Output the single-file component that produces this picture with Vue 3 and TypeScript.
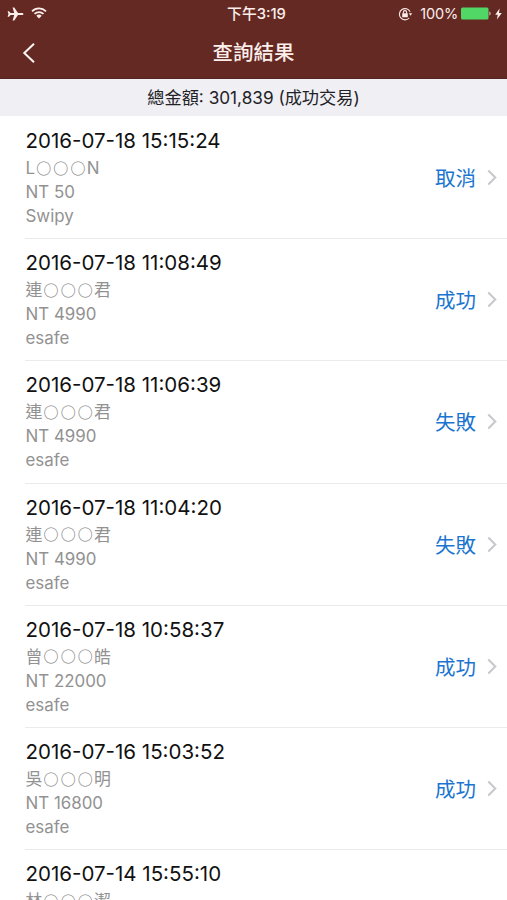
<script setup lang="ts">
interface Transaction {
  time: string
  first: string
  last: string
  amount: number
  channel: string
  status: string
}

const mask = '○○○'

const transactions: Transaction[] = [
  { time: '2016-07-18 15:15:24', first: 'L', last: 'N', amount: 50, channel: 'Swipy', status: '取消' },
  { time: '2016-07-18 11:08:49', first: '連', last: '君', amount: 4990, channel: 'esafe', status: '成功' },
  { time: '2016-07-18 11:06:39', first: '連', last: '君', amount: 4990, channel: 'esafe', status: '失敗' },
  { time: '2016-07-18 11:04:20', first: '連', last: '君', amount: 4990, channel: 'esafe', status: '失敗' },
  { time: '2016-07-18 10:58:37', first: '曾', last: '皓', amount: 22000, channel: 'esafe', status: '成功' },
  { time: '2016-07-16 15:03:52', first: '吳', last: '明', amount: 16800, channel: 'esafe', status: '成功' },
  { time: '2016-07-14 15:55:10', first: '林', last: '潔', amount: 3000, channel: 'esafe', status: '成功' },
]
</script>

<template>
  <div class="screen">
    <header class="top">
      <div class="statusbar">
        <div class="side">
          <svg class="plane" width="17" height="14" viewBox="0 0 17 14">
            <path d="M16.500 7c0-.7-.8-1.100-1.700-1.100H11L7.300.6H5.600L7.200 5.900H3.600L2 4.200H.6L1.500 7 .6 9.800H2L3.600 8.100h3.600l-1.600 5.300h1.700L11 8.100h3.800c.9 0 1.700-.4 1.700-1.100z" />
          </svg>
          <svg class="wifi" width="16" height="12" viewBox="0 0 16 12">
            <path class="arc" d="M1 4.300a10 10 0 0 1 14 0M3.500 6.900a6.400 6.400 0 0 1 9 0" />
            <path d="M5.300 8.700a3.900 3.900 0 0 1 5.400 0L8 11.600z" />
          </svg>
        </div>
        <span class="clock">下午3:19</span>
        <div class="side right">
          <svg class="lock" width="15" height="14" viewBox="0 0 15 14">
            <path class="ring" d="M12.100 4.800A5.600 5.600 0 1 0 11.200 11" />
            <path d="M10.800 6.200h3.400l-1.700 2.500z" />
            <rect x="4.200" y="6.200" width="5.600" height="4" rx=".5" />
            <path class="ring" d="M5.400 6.400V5.200a1.600 1.600 0 0 1 3.200 0v1.200" />
          </svg>
          <span class="percent">100%</span>
          <svg class="battery" width="31" height="13" viewBox="0 0 31 13">
            <rect class="charge" x="0" y=".5" width="27.500" height="12" rx="1.500" />
            <path d="M28.500 4.500c1.300.4 1.300 3.600 0 4z" />
          </svg>
          <svg class="bolt" width="7" height="12" viewBox="0 0 7 12">
            <path d="M4.600.5.2 6.800h2.600L1.900 11.500 6.800 5H4z" />
          </svg>
        </div>
      </div>
      <nav class="navbar">
        <button class="back" aria-label="返回">
          <svg width="14" height="22" viewBox="0 0 14 22"><path d="M12 1.800 2.300 11l9.700 9.200" /></svg>
        </button>
        <h1>查詢結果</h1>
      </nav>
    </header>
    <div class="summary">總金額: 301,839 (成功交易)</div>
    <ul class="list">
      <li v-for="item in transactions" :key="item.time" class="row">
        <div class="details">
          <div class="time">{{ item.time }}</div>
          <div class="sub">{{ item.first }}<span class="mask">{{ mask }}</span>{{ item.last }}</div>
          <div class="sub">NT {{ item.amount }}</div>
          <div class="sub">{{ item.channel }}</div>
        </div>
        <span class="status">{{ item.status }}</span>
        <svg class="chevron" width="10" height="17" viewBox="0 0 10 17"><path d="M1.300 1.500 8.300 8.500l-7 7" /></svg>
      </li>
    </ul>
  </div>
</template>

<style>
body {
  background: #fff;
}
</style>

<style scoped>
.screen {
  height: 900px;
  overflow: hidden;
  background: #fff;
  color: #111;
  font-family: Inter, "Noto Sans CJK TC", sans-serif;
}
.top {
  box-sizing: border-box;
  height: 79px;
  background: #652923;
  color: #fbeeeb;
  border-bottom: 1px solid #542521;
}
.statusbar {
  display: grid;
  grid-template-columns: 1fr auto 1fr;
  align-items: center;
  height: 27px;
  padding: 0 5px 0 7px;
}
.side {
  display: flex;
  align-items: center;
}
.side svg {
  fill: #fbeeeb;
  flex: none;
}
.side .wifi {
  margin: -1px 0 0 7px;
}
.side .arc {
  fill: none;
  stroke: #fbeeeb;
  stroke-width: 1.7;
}
.right {
  justify-content: flex-end;
}
.side .ring {
  fill: none;
  stroke: #fbeeeb;
  stroke-width: 1.1;
}
.side .charge {
  fill: #50d765;
}
.clock {
  margin-left: 4px;
  padding-top: 1px;
  font-size: 14.8px;
  font-weight: 500;
  line-height: 26px;
}
.percent {
  margin: 0 4px 0 7px;
  font-size: 14.5px;
  letter-spacing: -0.2px;
  line-height: 27px;
}
.side .battery {
  margin-left: -1px;
}
.side .bolt {
  margin-left: 3px;
}
.navbar {
  display: grid;
  grid-template-columns: 60px 1fr 60px;
  align-items: center;
  height: 51px;
}
.back {
  display: flex;
  padding: 0 0 0 22px;
  border: 0;
  background: none;
}
.back path {
  fill: none;
  stroke: #fff5f2;
  stroke-width: 2;
}
h1 {
  margin: 0;
  padding-top: 1px;
  font-size: 20.5px;
  line-height: 50px;
  font-weight: 500;
  text-align: center;
}
.summary {
  box-sizing: border-box;
  height: 37px;
  padding-top: 1px;
  background: #efeff4;
  color: #222226;
  font-size: 17.2px;
  line-height: 36px;
  text-align: center;
}
.list {
  margin: 0;
  padding: 1px 0 0 25px;
  list-style: none;
}
.row {
  box-sizing: border-box;
  display: flex;
  align-items: center;
  height: 122.2px;
  padding-right: 10px;
  border-bottom: 1px solid #eaeaec;
}
.details {
  flex: 1;
}
.time {
  height: 29px;
  padding-left: 0.5px;
  font-size: 20.5px;
  line-height: 27.5px;
}
.sub {
  height: 24px;
  padding-left: 0.5px;
  color: #929292;
  font-size: 16.9px;
  line-height: 24px;
}
.mask {
  margin: 0 -0.8px 0 1.2px;
  color: #808080;
  font-family: "Noto Sans CJK TC", sans-serif;
  font-size: 15px;
  font-weight: 500;
  letter-spacing: 2.1px;
  line-height: 1;
  vertical-align: 0.5px;
}
.status {
  padding-top: 3px;
  color: #1b75d0;
  font-size: 20.5px;
  line-height: 30px;
}
.chevron {
  margin-left: 11px;
}
.chevron path {
  fill: none;
  stroke: #c7c7cc;
  stroke-width: 2;
}
</style>
